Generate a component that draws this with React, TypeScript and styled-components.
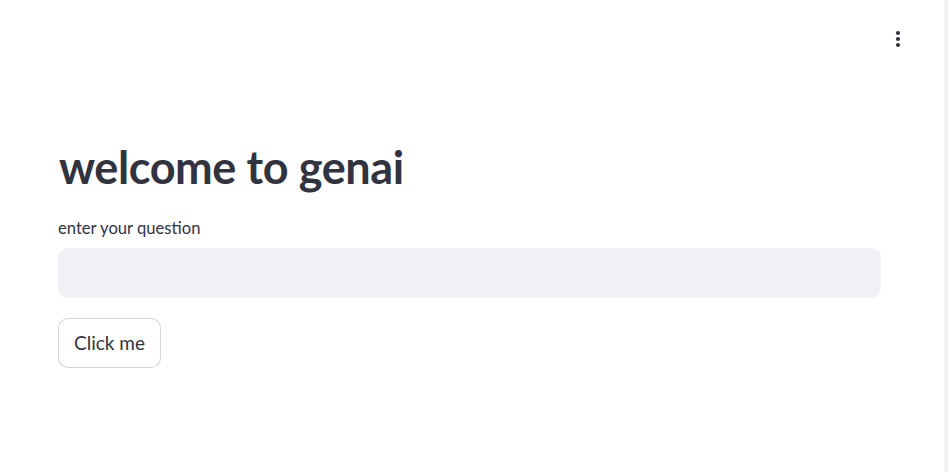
import React from "react";
import styled, { createGlobalStyle } from "styled-components";

const GlobalStyle = createGlobalStyle`
  html, body { margin: 0; padding: 0; background: #ffffff; }
  body { font-family: "Lato", "Noto Sans", sans-serif; color: #31333f; }
  #root { height: 472px; }
`;

const Shell = styled.div`
  display: flex;
  height: 472px;
  overflow: hidden;
`;

const Main = styled.div`
  flex: 1;
  display: flex;
  flex-direction: column;
`;

const ScrollTrack = styled.div`
  width: 3px;
  background: #efefef;
  border-left: 1px solid #f6f6f6;
`;

const Header = styled.header`
  display: flex;
  justify-content: flex-end;
  padding: 23px 30px 0 0;
  height: 32px;
`;

const MenuButton = styled.button`
  width: 32px;
  height: 32px;
  border: none;
  background: transparent;
  padding: 0;
  display: flex;
  align-items: center;
  justify-content: center;
  color: #31333f;
  cursor: pointer;
`;

const Block = styled.main`
  display: flex;
  flex-direction: column;
  align-items: flex-start;
  width: 823px;
  margin: 85px 0 0 58px;
`;

const Title = styled.h1`
  margin: 0;
  font-family: "Lato", sans-serif;
  font-weight: 700;
  font-size: 45px;
  line-height: 54px;
  letter-spacing: -0.4px;
  color: #31333f;
  padding-left: 1px;
`;

const Label = styled.label`
  margin: 24px 0 10px;
  font-size: 16.6px;
  line-height: 20px;
  color: #31333f;
`;

const Input = styled.input`
  box-sizing: border-box;
  width: 823px;
  height: 50px;
  border: none;
  border-radius: 10px;
  background: #f0f2f6;
  padding: 0 16px;
  font-family: inherit;
  font-size: 18px;
  color: #31333f;
  outline: none;
`;

const Button = styled.button`
  box-sizing: border-box;
  margin-top: 20px;
  height: 50px;
  padding: 0 15px 1px;
  display: flex;
  align-items: center;
  background: #ffffff;
  border: 1px solid rgba(49, 51, 63, 0.2);
  border-radius: 10px;
  font-family: "Lato", sans-serif;
  font-size: 19px;
  color: #31333f;
  cursor: pointer;
`;

function DotsIcon() {
  return (
    <svg width="6" height="18" viewBox="0 0 6 18" fill="currentColor">
      <circle cx="3" cy="3" r="2.1" />
      <circle cx="3" cy="9" r="2.1" />
      <circle cx="3" cy="15" r="2.1" />
    </svg>
  );
}

export default function App() {
  return (
    <>
      <GlobalStyle />
      <Shell>
        <Main>
          <Header>
            <MenuButton aria-label="Main menu">
              <DotsIcon />
            </MenuButton>
          </Header>
          <Block>
            <Title>welcome to genai</Title>
            <Label htmlFor="q">enter your question</Label>
            <Input id="q" type="text" />
            <Button>Click me</Button>
          </Block>
        </Main>
        <ScrollTrack />
      </Shell>
    </>
  );
}
